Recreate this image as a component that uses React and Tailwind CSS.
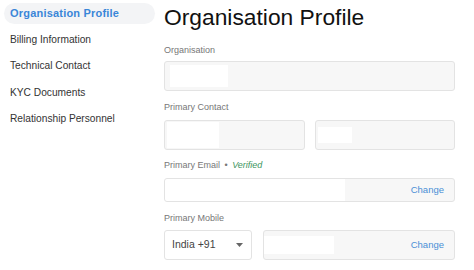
const menu = [
  'Organisation Profile',
  'Billing Information',
  'Technical Contact',
  'KYC Documents',
  'Relationship Personnel',
];

const Field = ({ children, className = '' }) => (
  <div
    className={`rounded-[3px] border border-[#e3e3e3] bg-[#f7f7f7] flex items-center ${className}`}
  >
    {children}
  </div>
);

const Label = ({ children, className = '' }) => (
  <p className={`text-[9px] leading-[11px] text-[#777] ${className}`}>{children}</p>
);

const App = () => {
  return (
    <div
      className="w-[474px] h-[270px] bg-white flex overflow-hidden"
      style={{ fontFamily: '"Liberation Sans", Arial, sans-serif' }}
    >
      <nav className="w-[164px] shrink-0 pt-[3px] pl-[4px]">
        {menu.map((item, i) => (
          <div
            key={item}
            className={`h-[21px] w-[151px] mb-[5.25px] pl-[6px] flex items-center rounded-full ${
              i === 0
                ? 'bg-[#f3f4f6] text-[#3a86d8] font-bold text-[11px] tracking-[0.2px]'
                : 'text-[#333] text-[10.2px]'
            }`}
          >
            {item}
          </div>
        ))}
      </nav>

      <main className="flex-1 pr-[19px]">
        <h1 className="text-[22.8px] leading-[26px] mt-[4px] text-[#111]">Organisation Profile</h1>

        <Label className="mt-[15px]">Organisation</Label>
        <Field className="mt-[5px] h-[30px]">
          <div className="h-[22px] w-[58px] ml-[5px] bg-white" />
        </Field>

        <Label className="mt-[11px]">Primary Contact</Label>
        <div className="mt-[7px] grid grid-cols-2 gap-[10px]">
          <Field className="h-[30px]">
            <div className="h-[26px] w-[52px] ml-[2px] bg-white" />
          </Field>
          <Field className="h-[30px]">
            <div className="h-[16px] w-[34px] ml-[2px] bg-white" />
          </Field>
        </div>

        <Label className="mt-[10px]">
          Primary Email <span className="mx-[2px]">•</span>{' '}
          <span className="italic text-[#3d9560]">Verified</span>
        </Label>
        <Field className="mt-[7px] h-[24px] justify-between">
          <div className="h-full w-[180px] bg-white rounded-l-[3px]" />
          <span className="text-[9.5px] text-[#4a8fd6] pr-[10px]">Change</span>
        </Field>

        <Label className="mt-[11px]">Primary Mobile</Label>
        <div className="mt-[6px] flex gap-[11px]">
          <div className="h-[30px] w-[88px] rounded-[3px] border border-[#e3e3e3] bg-white flex items-center justify-between pl-[7px] pr-[8px]">
            <span className="text-[10.5px] text-[#444]">India +91</span>
            <svg width="7" height="4" viewBox="0 0 7 4">
              <path d="M0 0h7L3.5 4z" fill="#666" />
            </svg>
          </div>
          <Field className="flex-1 h-[30px] justify-between">
            <div className="h-[18px] w-[70px] bg-white" />
            <span className="text-[9.5px] text-[#4a8fd6] pr-[10px]">Change</span>
          </Field>
        </div>
      </main>
    </div>
  );
};

export default App;
